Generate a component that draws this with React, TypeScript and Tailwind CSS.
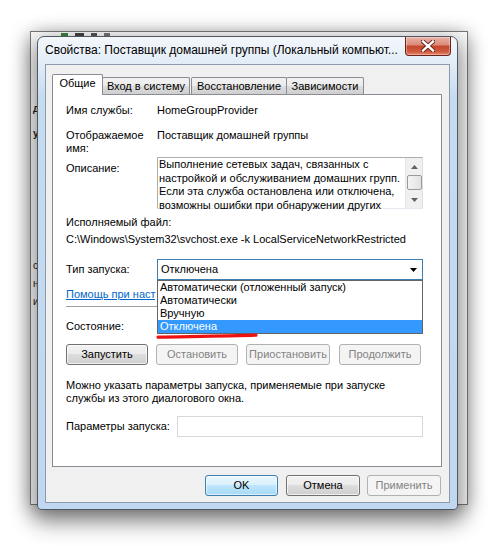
import React from "react";

const btn =
  "h-[21px] rounded-[3px] border border-[#707070] bg-[linear-gradient(#f2f2f2_0%,#ebebeb_49%,#dddddd_50%,#cfcfcf_100%)] shadow-[inset_0_0_0_1px_rgba(255,255,255,0.7)] flex items-center justify-center text-black";
const btnDisabled =
  "h-[21px] rounded-[3px] border border-[#adb2b5] bg-[#f4f4f4] flex items-center justify-center text-[#838383]";

function Tab({ label, w, active }: { label: string; w: string; active?: boolean }) {
  if (active) {
    return (
      <div
        className={`${w} h-[21px] -mb-px relative z-10 border border-b-0 border-[#898c95] bg-white flex items-start justify-center pt-[2px] rounded-t-[2px]`}
      >
        {label}
      </div>
    );
  }
  return (
    <div
      className={`${w} h-[17px] border border-b-0 border-[#898c95] -ml-px bg-[linear-gradient(#f2f2f2_0%,#ebebeb_50%,#dddddd_51%,#cfcfcf_100%)] flex items-center justify-center rounded-t-[2px]`}
    >
      {label}
    </div>
  );
}

export default function App() {
  return (
    <div className="relative w-[494px] h-[548px] overflow-hidden bg-white text-[11px] text-black font-['Liberation_Sans',Arial,sans-serif]">
      {/* window behind */}
      <div className="absolute left-[30px] top-[31px] w-[438px] h-[474px] bg-white border border-[#7a7a7a] shadow-[0_4px_18px_rgba(0,0,0,0.35)] overflow-hidden">
        <div className="flex items-center gap-[7px] pl-[30px] h-[7px] text-[#333]">
          <span className="w-[7px] h-[6px] bg-[#3a8a3a]" />
          <span className="w-[9px] h-[6px] bg-[#444]" />
          <span className="w-[6px] h-[6px] bg-[#555]" />
          <span className="w-[6px] h-[6px] bg-[#777]" />
        </div>
        <div className="flex flex-col pl-[2px] pt-[64px] gap-[13px] font-bold text-[10px] leading-[12px] text-[#222]">
          <span>д</span>
          <span>у</span>
        </div>
        <div className="flex flex-col pl-[2px] pt-[120px] gap-[6px] text-[10px] leading-[12px] text-[#222]">
          <span>с</span>
          <span>н</span>
          <span>и</span>
        </div>
      </div>

      {/* dialog */}
      <div className="absolute left-[37px] top-[36px] w-[421px] h-[474px] flex flex-col rounded-t-[7px] rounded-b-[4px] border border-[#4f5863] bg-[linear-gradient(#f3f7fb_0px,#e2ecf7_27px,#c6dbf0_60px,#c0d7ef_100%)] shadow-[0_8px_22px_4px_rgba(0,0,0,0.45)]">
        {/* title bar */}
        <div className="relative h-[27px] flex items-center pl-[7px] text-[12px] text-black shrink-0">
          <span className="leading-[15px]">Свойства: Поставщик домашней группы (Локальный компьют...</span>
          <div className="absolute right-[6px] top-0 w-[46px] h-[19px] rounded-b-[4px] border border-t-0 border-[#6f2115] bg-[linear-gradient(#eab2a6_0%,#d98a78_45%,#c4452b_50%,#cf5a3e_80%,#e2866a_100%)] flex items-center justify-center shadow-[inset_0_0_0_1px_rgba(255,255,255,0.35)]">
            <svg width="14" height="12" viewBox="0 0 14 12">
              <path d="M2 1.5 L12 10.5 M12 1.5 L2 10.5" stroke="#5a1a10" strokeWidth="4.2" strokeLinecap="square" />
              <path d="M2 1.5 L12 10.5 M12 1.5 L2 10.5" stroke="#ffffff" strokeWidth="2.4" strokeLinecap="square" />
            </svg>
          </div>
        </div>

        {/* client area */}
        <div className="mx-[7px] mb-[6px] flex-1 border border-[#8a9bab] bg-[#f0f0f0] flex flex-col">
          {/* tabs */}
          <div className="ml-[6px] mt-[9px] flex items-end h-[20px] leading-[13px]">
            <Tab label="Общие" w="w-[51px]" active />
            <Tab label="Вход в систему" w="w-[88px]" />
            <div className="w-[2px]" />
            <Tab label="Восстановление" w="w-[96px]" />
            <Tab label="Зависимости" w="w-[78px]" />
          </div>

          {/* panel */}
          <div className="ml-[6px] w-[390px] h-[373px] border border-[#898c95] bg-white">
            <div className="relative pl-[13px] pt-[8px] leading-[15px]">
              <div className="flex">
                <div className="w-[91px]">Имя службы:</div>
                <div>HomeGroupProvider</div>
              </div>

              <div className="flex mt-[11px] leading-[13px]">
                <div className="w-[91px]">
                  Отображаемое
                  <br />
                  имя:
                </div>
                <div>Поставщик домашней группы</div>
              </div>

              <div className="flex mt-[2px]">
                <div className="w-[91px] pt-[4px]">Описание:</div>
                <div className="w-[266px] h-[52px] border border-[#abadb3] border-r-[#dbdfe6] border-b-[#e3e9ef] bg-white flex">
                  <div className="flex-1 pl-[1px] pt-[0px] leading-[13.5px]">
                    Выполнение сетевых задач, связанных с
                    <br />
                    настройкой и обслуживанием домашних групп.
                    <br />
                    Если эта служба остановлена или отключена,
                    <br />
                    возможны ошибки при обнаружении других
                  </div>
                  <div className="w-[17px] bg-[#f0f0f0] border-l border-[#e6e6e6] flex flex-col items-center">
                    <div className="h-[17px] w-full flex items-center justify-center">
                      <svg width="7" height="4" viewBox="0 0 7 4">
                        <path d="M0 4 L3.5 0 L7 4 Z" fill="#606060" />
                      </svg>
                    </div>
                    <div className="w-[15px] h-[15px] rounded-[2px] border border-[#9a9a9a] bg-[linear-gradient(90deg,#f4f4f4,#e2e2e2)]" />
                    <div className="flex-1" />
                    <div className="h-[17px] w-full flex items-center justify-center">
                      <svg width="7" height="4" viewBox="0 0 7 4">
                        <path d="M0 0 L7 0 L3.5 4 Z" fill="#606060" />
                      </svg>
                    </div>
                  </div>
                </div>
              </div>

              <div className="mt-[6px]">Исполняемый файл:</div>
              <div className="mt-[2px]">C:\Windows\System32\svchost.exe -k LocalServiceNetworkRestricted</div>

              <div className="flex items-center mt-[12px]">
                <div className="w-[91px]">Тип запуска:</div>
                <div className="relative w-[266px] h-[21px] border border-[#3c7fb1] bg-white flex items-center pl-[3px]">
                  <span className="flex-1">Отключена</span>
                  <svg className="mr-[5px]" width="7" height="4" viewBox="0 0 7 4">
                    <path d="M0 0 L7 0 L3.5 4 Z" fill="#000" />
                  </svg>
                  {/* dropdown list */}
                  <div className="absolute left-[-1px] top-[20px] w-[266px] border border-[#646464] bg-white z-20 leading-[13px]">
                    <div className="h-[13px] pl-[2px]">Автоматически (отложенный запуск)</div>
                    <div className="h-[13px] pl-[2px]">Автоматически</div>
                    <div className="h-[13px] pl-[2px]">Вручную</div>
                    <div className="h-[13px] pl-[2px] bg-[#3399ff] text-white">Отключена</div>
                  </div>
                  <svg className="absolute left-[-2px] top-[72px] z-30" width="104" height="8" viewBox="0 0 104 8">
                    <path d="M2 5.2 C 30 4.6, 70 4.2, 100 3.2" stroke="#ee1111" strokeWidth="3.2" strokeLinecap="round" fill="none" />
                  </svg>
                </div>
              </div>

              <div className="mt-[7px] w-[90px] overflow-hidden whitespace-nowrap text-[#0066cc] underline">
                Помощь при настройке
              </div>
              <div className="mt-[4px] w-[356px] h-px bg-[#a0a0a0]" />

              <div className="mt-[12px]">Состояние:</div>

              <div className="flex mt-[10px]">
                <div className={`${btn} w-[82px]`}>Запустить</div>
                <div className={`${btnDisabled} w-[82px] ml-[8px]`}>Остановить</div>
                <div className={`${btnDisabled} w-[84px] ml-[8px]`}>Приостановить</div>
                <div className={`${btnDisabled} w-[82px] ml-[9px]`}>Продолжить</div>
              </div>

              <div className="mt-[14px] leading-[13px]">
                Можно указать параметры запуска, применяемые при запуске
                <br />
                службы из этого диалогового окна.
              </div>

              <div className="flex items-center mt-[11px]">
                <div className="w-[111px]">Параметры запуска:</div>
                <div className="w-[246px] h-[21px] border border-[#d5d9de] bg-white" />
              </div>
            </div>
          </div>

          {/* dialog buttons */}
          <div className="flex justify-end mt-[8px] pr-[8px]">
            <div className="w-[73px] h-[21px] rounded-[3px] border border-[#3c7fb1] bg-[linear-gradient(#eaf6fd_0%,#d9f0fc_49%,#bee6fd_50%,#a7d9f5_100%)] shadow-[inset_0_0_0_1px_rgba(255,255,255,0.6)] flex items-center justify-center">
              OK
            </div>
            <div className={`${btn} w-[74px] ml-[8px]`}>Отмена</div>
            <div className={`${btnDisabled} w-[74px] ml-[7px]`}>Применить</div>
          </div>
        </div>
      </div>
    </div>
  );
}
